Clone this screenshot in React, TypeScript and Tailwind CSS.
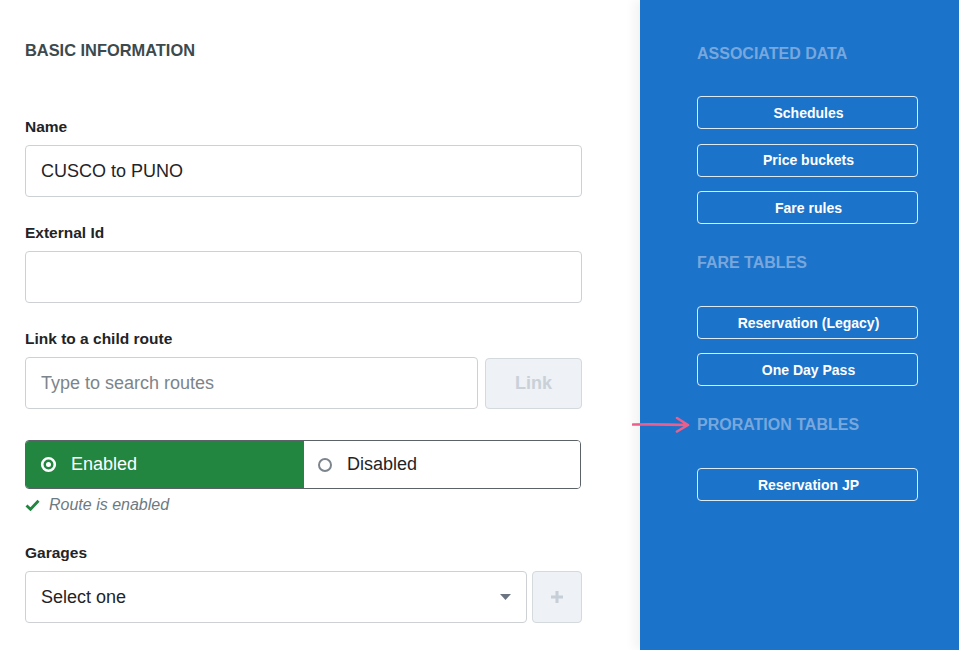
import React from 'react';

const font = { fontFamily: '"Liberation Sans", Arial, sans-serif' };

const Label: React.FC<{ children: React.ReactNode }> = ({ children }) => (
  <div className="text-[15.5px] leading-5 font-bold text-[#1f2427] mb-2">{children}</div>
);

const TextInput: React.FC<{ value?: string; placeholder?: string; className?: string }> = ({
  value,
  placeholder,
  className = '',
}) => (
  <input
    type="text"
    defaultValue={value}
    placeholder={placeholder}
    className={`h-[52px] border border-[#cdd1d4] rounded-[4px] px-[15px] text-[18px] text-[#1f2427] placeholder-[#7b858b] bg-white outline-none ${className}`}
    style={font}
  />
);

const SideButton: React.FC<{ children: React.ReactNode }> = ({ children }) => (
  <button className="w-[221px] h-[33px] border border-white/85 rounded-[4px] text-white text-[14px] font-bold leading-none pl-[2px]">
    {children}
  </button>
);

const SideHeading: React.FC<{ children: React.ReactNode; className?: string }> = ({ children, className = '' }) => (
  <div className={`text-[16px] leading-5 font-bold text-[#78a7de] ${className}`}>{children}</div>
);

export default function App() {
  return (
    <div className="flex h-screen w-full overflow-hidden bg-white" style={font}>
      {/* Form column */}
      <div className="w-[640px] shrink-0 pl-[25px] pt-[40px]">
        <div className="w-[557px]">
          <div className="text-[16.4px] leading-5 font-bold text-[#3c4a4e]">BASIC INFORMATION</div>

          <div className="mt-[57px]">
            <Label>Name</Label>
            <TextInput value="CUSCO to PUNO" className="w-full" />
          </div>

          <div className="mt-[26px]">
            <Label>External Id</Label>
            <TextInput className="w-full" />
          </div>

          <div className="mt-[26px]">
            <Label>Link to a child route</Label>
            <div className="flex gap-[7px]">
              <TextInput placeholder="Type to search routes" className="flex-1 min-w-0" />
              <button className="w-[97px] h-[51px] mt-px bg-[#eef1f5] border border-[#d4d9de] rounded-[4px] text-[18px] font-bold text-[#c9d0d8]">
                Link
              </button>
            </div>
          </div>

          {/* Enabled / Disabled toggle */}
          <div className="mt-[31px] flex h-[49px] w-[556px] border border-[#5b6369] rounded-[4px] overflow-hidden">
            <div className="w-[278px] bg-[#228540] flex items-center pl-[14px] gap-[14px] text-white text-[18px]">
              <svg width="17" height="17" viewBox="0 0 17 17">
                <circle cx="8.5" cy="8.5" r="6.3" fill="none" stroke="white" strokeWidth="2.6" />
                <circle cx="8.5" cy="8.5" r="2.5" fill="white" />
              </svg>
              <span>Enabled</span>
            </div>
            <div className="flex-1 bg-white flex items-center pl-[13px] gap-[14px] text-[#1f2427] text-[18px]">
              <svg width="16" height="16" viewBox="0 0 16 16">
                <circle cx="8" cy="8" r="6" fill="none" stroke="#7c858c" strokeWidth="2" />
              </svg>
              <span>Disabled</span>
            </div>
          </div>

          <div className="mt-[6px] flex items-center gap-[9px] h-5">
            <svg width="15" height="12" viewBox="0 0 15 12">
              <path d="M1.5 6.5 L5.5 10.3 L13.5 1.8" fill="none" stroke="#228540" strokeWidth="2.8" strokeLinejoin="miter" />
            </svg>
            <span className="italic text-[16px] text-[#6c7a81]">Route is enabled</span>
          </div>

          <div className="mt-[28px]">
            <Label>Garages</Label>
            <div className="flex gap-[5px]">
              <div className="flex-1 h-[52px] border border-[#cdd1d4] rounded-[4px] flex items-center justify-between pl-[15px] pr-[15px] text-[18px] text-[#1f2427]">
                <span>Select one</span>
                <svg width="11" height="6" viewBox="0 0 11 6">
                  <path d="M0 0 H11 L5.5 6 Z" fill="#6b7480" />
                </svg>
              </div>
              <button className="w-[50px] h-[52px] bg-[#eef1f5] border border-[#d4d9de] rounded-[4px] flex items-center justify-center">
                <svg width="14" height="14" viewBox="0 0 14 14">
                  <path d="M7 1 V13 M1 7 H13" stroke="#c6ced7" strokeWidth="3" />
                </svg>
              </button>
            </div>
          </div>
        </div>
      </div>

      {/* Side panel */}
      <div className="relative flex-1 bg-[#1b74c9] pl-[57px] pt-[44px] shadow-[-6px_0_10px_rgba(0,0,0,0.05)]">
        <SideHeading>ASSOCIATED DATA</SideHeading>
        <div className="mt-[32px] flex flex-col gap-[14.5px]">
          <SideButton>Schedules</SideButton>
          <SideButton>Price buckets</SideButton>
          <SideButton>Fare rules</SideButton>
        </div>

        <SideHeading className="mt-[29px]">FARE TABLES</SideHeading>
        <div className="mt-[33px] flex flex-col gap-[14px]">
          <SideButton>Reservation (Legacy)</SideButton>
          <SideButton>One Day Pass</SideButton>
        </div>

        <div className="relative mt-[29px]">
          <SideHeading>PRORATION TABLES</SideHeading>
          <svg
            className="absolute left-[-65px] top-[1px]"
            width="60"
            height="18"
            viewBox="0 0 60 18"
          >
            <path
              d="M1 8.5 Q28 8 55 9 M45 2 L56 9 L45 15.5"
              fill="none"
              stroke="#ec5f8c"
              strokeWidth="2.6"
              strokeLinecap="round"
              strokeLinejoin="round"
            />
          </svg>
        </div>
        <div className="mt-[33px] flex flex-col gap-[14px]">
          <SideButton>Reservation JP</SideButton>
        </div>
      </div>
    </div>
  );
}
